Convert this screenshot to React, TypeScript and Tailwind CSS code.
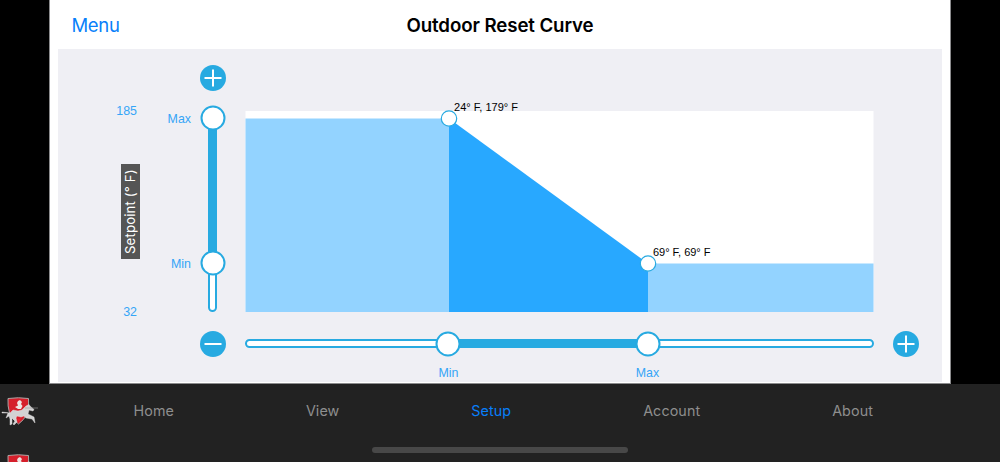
import clsx from "clsx";

const NAV_ITEMS = ["Home", "View", "Setup", "Account", "About"];
const ACTIVE_ITEM = "Setup";

export default function App() {
  return (
    <div className="flex h-[462px] w-[1000px] flex-col overflow-hidden bg-black font-['Inter',sans-serif]">
      <main className="mx-auto flex h-[384px] w-[902px] shrink-0 flex-col border-x border-b border-[#8b8b8d] bg-white px-2">
        <Header />
        <ResetCurve />
      </main>
      <TabBar />
    </div>
  );
}

function Header() {
  return (
    <header className="grid h-[49px] shrink-0 grid-cols-[1fr_auto_1fr] items-center pt-[3px]">
      <button className="justify-self-start pl-[13.5px] text-[18.5px] tracking-[-0.35px] text-[#087ffa]">
        Menu
      </button>
      <h1 className="text-[18.7px] font-semibold tracking-[-0.1px] text-black">
        Outdoor Reset Curve
      </h1>
    </header>
  );
}

function ResetCurve() {
  return (
    <section className="grid h-[333px] grid-cols-[79px_54px_54px_629px_1fr] grid-rows-[62px_201px_45px_1fr] bg-[#efeff4] font-['Liberation_Sans',sans-serif] text-[12.4px] text-[#35a5f7]">
      <div className="col-start-3 flex justify-center pt-4 pr-[11px]">
        <StepButton plus />
      </div>

      <div className="col-start-1 row-start-2 flex flex-col items-end justify-between leading-none">
        <span className="-mt-1.5">185</span>
        <span className="mr-[-3px] h-[95px] w-[19px] rotate-180 bg-[#555] text-center font-['Inter',sans-serif] text-[13.2px] leading-[19px] tracking-[0.15px] text-white [writing-mode:vertical-rl]">
          Setpoint (° F)
        </span>
        <span className="-mb-1.5">32</span>
      </div>

      <div className="relative col-start-2 row-start-2 leading-none">
        <span className="absolute top-[2px] right-0">Max</span>
        <span className="absolute top-[147px] right-0">Min</span>
      </div>

      <div className="col-start-3 row-start-2 flex justify-center pr-[11px]">
        <div className="relative w-[9px] rounded-full border-2 border-[#27aae1] bg-white">
          <div className="absolute -inset-x-[2px] top-[6px] h-[145px] bg-[#27aae1]" />
          <Knob className="top-[5.4px] left-1/2" />
          <Knob className="top-[150.4px] left-1/2" />
        </div>
      </div>

      <Chart />

      <div className="col-start-3 row-start-3 flex justify-center pt-[19px] pr-[11px]">
        <StepButton />
      </div>

      <div className="col-start-4 row-start-3 pt-[27.4px]">
        <div className="relative h-[9px] rounded-full border-2 border-[#27aae1] bg-white">
          <div className="absolute -inset-y-[2px] left-[202px] w-[199px] bg-[#27aae1]" />
          <Knob className="top-1/2 left-[201.4px]" />
          <Knob className="top-1/2 left-[400.5px]" />
        </div>
      </div>

      <div className="col-start-5 row-start-3 pt-[19px] pl-[19px]">
        <StepButton plus />
      </div>

      <div className="relative col-start-4 row-start-4 leading-none">
        <span className="absolute top-[10px] left-[203.5px] -translate-x-1/2">Min</span>
        <span className="absolute top-[10px] left-[402.5px] -translate-x-1/2">Max</span>
      </div>
    </section>
  );
}

function Chart() {
  return (
    <svg
      className="col-start-4 row-start-2 overflow-visible"
      width="629"
      height="201"
      viewBox="-0.5 0 629 201"
    >
      <rect width="628" height="201" fill="#fff" />
      <path d="M0 7.5H203.5V201H0Z" fill="#93d3ff" />
      <path d="M402.5 152.5H628V201H402.5Z" fill="#93d3ff" />
      <path d="M203.5 7.5L402.5 152.5V201H203.5Z" fill="#28a8ff" />
      <g fill="#fff" stroke="#27aae1" strokeWidth="1.2">
        <circle cx="203.5" cy="7.5" r="7.7" />
        <circle cx="402.5" cy="152.5" r="7.7" />
      </g>
      <g fill="#000" fontSize="11">
        <text x="208.5" y="0" textLength="64">24° F, 179° F</text>
        <text x="407.5" y="145" textLength="57.5">69° F, 69° F</text>
      </g>
    </svg>
  );
}

function Knob({ className }: { className: string }) {
  return (
    <div
      className={clsx(
        "absolute size-[25px] -translate-x-1/2 -translate-y-1/2 rounded-full border-2 border-[#27aae1] bg-white",
        className
      )}
    />
  );
}

function StepButton({ plus = false }: { plus?: boolean }) {
  return (
    <button className="size-[26px]" aria-label={plus ? "Increase" : "Decrease"}>
      <svg viewBox="0 0 26 26" stroke="#fff" strokeWidth="2">
        <circle cx="13" cy="13" r="13" fill="#27aae1" stroke="none" />
        <path d="M4.5 13H21.5" />
        {plus && <path d="M13 4.5V21.5" />}
      </svg>
    </button>
  );
}

function TabBar() {
  return (
    <footer className="flex flex-1 bg-[#222]">
      <div className="flex w-10 shrink-0 flex-col gap-[26px] pt-[12px]">
        <KnightLogo />
        <KnightLogo />
      </div>
      <div className="flex flex-1 flex-col pr-[127px] pl-[93.5px]">
        <nav className="flex justify-between pt-4 text-[14.3px] leading-[22px] tracking-[0.1px] text-[#8e8e8e]">
          {NAV_ITEMS.map((item) => (
            <a key={item} className={clsx(item === ACTIVE_ITEM && "text-[#087ffa]")}>
              {item}
            </a>
          ))}
        </nav>
        <div className="mt-[25px] ml-[238.5px] h-[6px] w-[256px] rounded-full bg-[#484848]" />
      </div>
    </footer>
  );
}

function KnightLogo() {
  return (
    <svg className="shrink-0" width="40" height="31" viewBox="0 0 40 31">
      <path
        d="M8 2.5Q18.5 1 28.5 2.5Q29.5 11 27 18Q24 24 18.5 28Q12 23 9.5 17Q7.5 10 8 2.5Z"
        fill="#d51f2b"
        stroke="#aaa6a5"
        strokeWidth="1"
      />
      <path
        d="M18 5L20 4L22 6L21 8L22.5 10L21 13L18 13L15 11L18 9.5L17 7Z"
        fill="#eee4e2"
      />
      <path
        d="M2 16L10 17L13 14L18 15L22 14L26 10L29 8.5L30 10L34 13.5L33 15L29 14L28 18L34 21L35 27L32 23L26 22L24 20L21 21L17 20L16 22L17 26L14 29L13 28L15 25L12 22L12 28L10 29L10 23L9 20L6 22L8 17L2 17Z"
        fill="#d3d2d3"
        stroke="#efeeee"
        strokeWidth=".4"
      />
      <path d="M25 12L38 12" stroke="#999" strokeWidth=".6" />
      <path d="M17 22.5L21 22.5L19 26Z" fill="#ed2635" />
    </svg>
  );
}
